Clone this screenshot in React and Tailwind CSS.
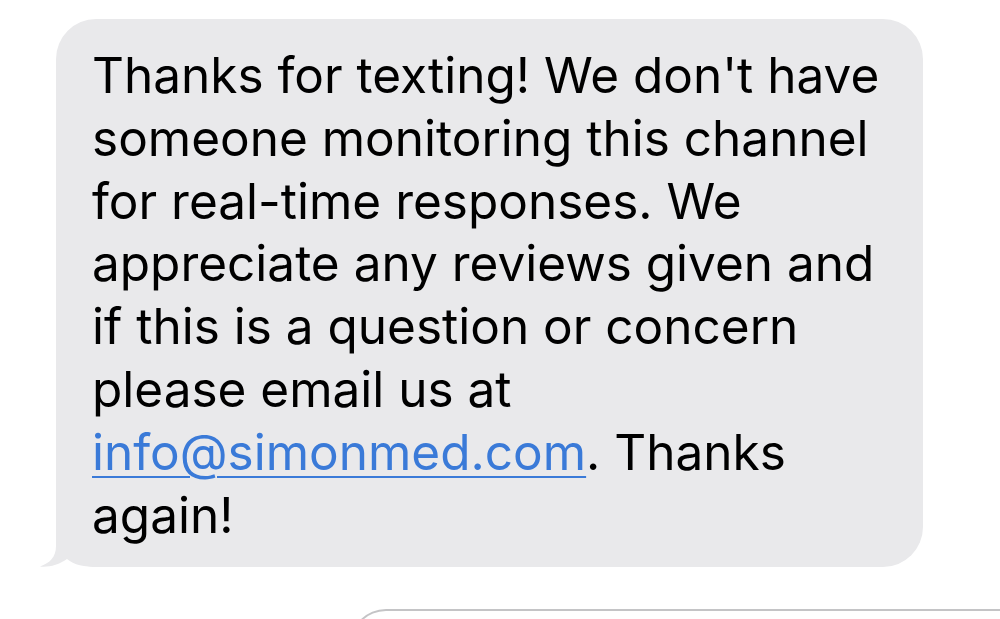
import React from "react";

const lines = [
  "Thanks for texting! We don't have",
  "someone monitoring this channel",
  "for real-time responses. We",
  "appreciate any reviews given and",
  "if this is a question or concern",
  "please email us at",
];

export default function App() {
  return (
    <div className="w-[1000px] h-[619px] bg-white overflow-hidden relative font-['Inter',sans-serif]">
      <div className="pt-[19px] pl-[56px]">
        <div className="relative w-[867px] bg-[#e9e9eb] rounded-[40px] pl-[36px] pt-[25px] pb-[21px]">
          {/* tail */}
          <svg className="absolute left-[-16px] bottom-0" width="70" height="45" viewBox="0 0 70 45">
            <path
              d="M16 0 L16 24 C16 35 10 41 0 44.5 C8 45.5 19 43 27 37 C34 43 44 45 58 45 L70 45 L70 0 Z"
              fill="#e9e9eb"
            />
          </svg>
          <div className="relative text-[49.5px] leading-[62.8px] text-black">
            {lines.map((l, i) => (
              <div key={i} className="whitespace-nowrap">{l}</div>
            ))}
            <div className="whitespace-nowrap">
              <span className="text-[#3a7ad8] underline decoration-[2px] underline-offset-[6px]">info@simonmed.com</span>. Thanks
            </div>
            <div className="whitespace-nowrap">again!</div>
          </div>
        </div>
      </div>
      {/* next bubble, cut off */}
      <div className="absolute left-[350px] top-[609px] w-[700px] h-[40px] border-t-[2px] border-l-[2px] border-[#c4c4c6] rounded-tl-[36px]" />
    </div>
  );
}
